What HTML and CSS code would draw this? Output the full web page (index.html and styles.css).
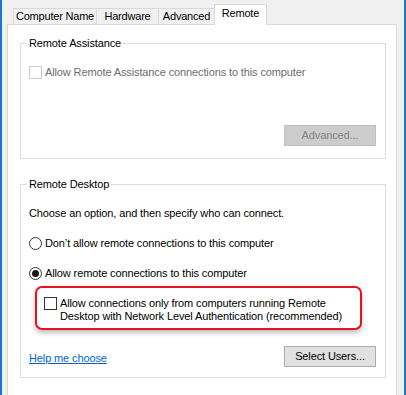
FILE: index.html
```html
<!DOCTYPE html>
<html>
<head>
<meta charset="utf-8">
<link rel="stylesheet" href="styles.css">
</head>
<body>
<div class="window">
  <div class="tabs">
    <div class="tab tab-name">Computer Name</div>
    <div class="tab tab-hw">Hardware</div>
    <div class="tab tab-adv">Advanced</div>
    <div class="tab tab-remote active">Remote</div>
  </div>
  <div class="panel">
    <fieldset class="group group-assist">
      <legend>Remote Assistance</legend>
      <label class="check disabled"><span class="box"></span><span>Allow Remote Assistance connections to this computer</span></label>
      <div class="actions"><button class="btn" disabled>Advanced...</button></div>
    </fieldset>
    <fieldset class="group group-desktop">
      <legend>Remote Desktop</legend>
      <p class="intro">Choose an option, and then specify who can connect.</p>
      <label class="radio"><span class="circle"></span><span>Don’t allow remote connections to this computer</span></label>
      <label class="radio checked"><span class="circle"></span><span>Allow remote connections to this computer</span></label>
      <div class="highlight">
        <label class="check"><span class="box"></span><span>Allow connections only from computers running Remote<br>Desktop with Network Level Authentication (recommended)</span></label>
      </div>
      <div class="footer">
        <a class="help" href="#">Help me choose</a>
        <button class="btn">Select Users...</button>
      </div>
    </fieldset>
  </div>
</div>
</body>
</html>
```
FILE: styles.css
```css
html, body {
  margin: 0;
  padding: 0;
}
body {
  background: #f0f0f0;
  font-family: "Liberation Sans", Arial, sans-serif;
  font-size: 11px;
  line-height: 13px;
  letter-spacing: -0.12px;
  color: #000;
}
.window {
  height: 395px;
  box-sizing: border-box;
  border-left: 2px solid #1979d2;
  border-right: 2px solid #1979d2;
  padding: 4px 7px 0 5px;
  overflow: hidden;
}
.tabs {
  display: flex;
  align-items: flex-end;
  height: 20px;
  padding-left: 6px;
}
.tab {
  box-sizing: border-box;
  height: 16px;
  border: 1px solid #d9d9d9;
  border-bottom: none;
  margin-left: -1px;
  background: #f0f0f0;
  text-align: center;
  line-height: 15px;
  white-space: nowrap;
  letter-spacing: -0.2px;
}
.tab:first-child { margin-left: 0; }
.tab-name { width: 84px; }
.tab-hw { width: 63px; }
.tab-adv { width: 57px; }
.tab-remote { width: 53px; }
.tab.active {
  position: relative;
  z-index: 1;
  height: 21px;
  margin-bottom: -1px;
  background: #fff;
  line-height: 17px;
}
.panel {
  height: 400px;
  box-sizing: border-box;
  background: #fff;
  border: 1px solid #d9d9d9;
  padding: 11px 10px 0 12px;
}
.group {
  margin: 0;
  min-width: 0;
  border: 1px solid #dcdcdc;
  padding: 0 9px 12px 8px;
}
.group legend {
  padding: 0 2px;
  margin-left: -2px;
  line-height: 14px;
}
.group-desktop {
  margin-top: 18px;
  padding-bottom: 10px;
}
.check, .radio {
  display: flex;
  align-items: flex-start;
  line-height: 13px;
  white-space: nowrap;
}
.box {
  flex: none;
  width: 13px;
  height: 13px;
  box-sizing: border-box;
  border: 1px solid #333;
  background: #fff;
  margin-right: 3px;
}
.disabled { color: #6d6d6d; }
.disabled .box { border-color: #cccccc; }
.group-assist .check { margin-top: 16px; }
.actions {
  display: flex;
  justify-content: flex-end;
  margin-top: 46px;
}
.btn {
  width: 92px;
  height: 21px;
  box-sizing: border-box;
  border: 1px solid #adadad;
  background: #e1e1e1;
  font: inherit;
  letter-spacing: inherit;
  color: #000;
  padding: 0;
}
.btn:disabled {
  background: #cccccc;
  border-color: #bfbfbf;
  color: #838383;
}
.intro {
  margin: 16px 0 0;
}
.radio { margin-top: 17px; }
.circle {
  flex: none;
  width: 13px;
  height: 13px;
  box-sizing: border-box;
  border: 1px solid #333;
  border-radius: 50%;
  background: #fff;
  margin-right: 3px;
  display: flex;
  align-items: center;
  justify-content: center;
}
.radio.checked .circle::after {
  content: "";
  width: 7px;
  height: 7px;
  border-radius: 50%;
  background: #1a1a1a;
}
.highlight {
  margin: 6px 14px 0 6px;
  height: 44px;
  box-sizing: border-box;
  border: 2px solid #e8111f;
  border-radius: 7px;
  box-shadow: 0 3px 5px rgba(0, 0, 0, 0.25);
  padding: 9px 7px 0 7px;
  background: #fff;
}
.footer {
  display: flex;
  justify-content: space-between;
  align-items: center;
  margin-top: 16px;
}
.help {
  color: #0066cc;
  text-decoration: underline;
  padding-top: 3px;
}
```
